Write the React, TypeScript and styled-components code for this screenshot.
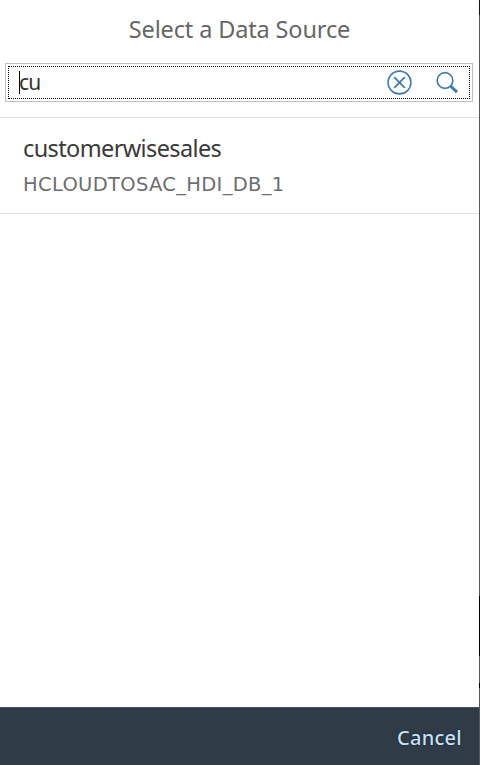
import React from "react";
import styled, { createGlobalStyle } from "styled-components";

const GlobalStyle = createGlobalStyle`
  * { box-sizing: border-box; }
  body { margin: 0; background: #fff; overflow: hidden; font-family: "Noto Sans", "Open Sans", sans-serif; }
`;

const Dialog = styled.main`
  width: 480px;
  height: 765px;
  display: flex;
  flex-direction: column;
  background: #fff;
  border-right: 1px solid;
  border-image: linear-gradient(#0a1420 0 16px, #54585a 16px 595px, #000 595px 655px, #54585a 655px 682px, #000 682px 687px, #54585a 687px) 1;
  border-width: 0 1px 0 0;
`;

const Title = styled.h1`
  margin: 0;
  height: 63px;
  padding-top: 13px;
  text-align: center;
  font-size: 23.5px;
  line-height: 32px;
  font-weight: 400;
  letter-spacing: -0.14px;
  color: #666;
`;

const SearchBox = styled.div`
  width: 468px;
  height: 39px;
  margin-left: 5px;
  padding: 2px;
  border: 1px solid #bfbfbf;
`;

const FocusFrame = styled.div`
  height: 33px;
  display: flex;
  align-items: center;
  border: 1px dotted #000;
  padding: 0 9px 0 10px;
`;

const Caret = styled.span`
  width: 1px;
  height: 23px;
  margin-right: -1px;
  background: #000;
`;

const Query = styled.span`
  flex: 1;
  padding-bottom: 2px;
  font-size: 21px;
  line-height: 28px;
  letter-spacing: -0.8px;
  color: #333;
`;

const IconButton = styled.button<{ $gap?: number }>`
  display: flex;
  padding: 0;
  margin: 0 ${(p) => p.$gap ?? 0}px 0 0;
  border: 0;
  background: none;
  color: #427cac;
`;

const List = styled.ul`
  flex: 1;
  margin: 15px 0 0;
  padding: 0;
  list-style: none;
  border-top: 1px solid #e5e5e5;
`;

const Item = styled.li`
  height: 96px;
  padding: 14px 23px 0;
  border-bottom: 1px solid #e5e5e5;
`;

const Name = styled.div`
  font-size: 23.5px;
  line-height: 32px;
  letter-spacing: -0.62px;
  color: #3a3a3a;
`;

const Source = styled.div`
  margin-top: 7px;
  font-family: "DejaVu Sans", sans-serif;
  font-size: 19.5px;
  line-height: 28px;
  letter-spacing: 0.32px;
  color: #6e6e6e;
`;

const Footer = styled.footer`
  height: 58px;
  display: flex;
  justify-content: flex-end;
  align-items: center;
  padding: 3px 17px 0 0;
  background: #2f3c48;
  border-top: 1px solid #465564;
`;

const CancelButton = styled.button`
  padding: 0;
  border: 0;
  background: none;
  font: 500 20px/28px "Noto Sans", sans-serif;
  letter-spacing: 0.25px;
  color: #c8e0f8;
  text-shadow: 0 0 2px #101820;
`;

export default function App() {
  return (
    <>
      <GlobalStyle />
      <Dialog>
        <Title>Select a Data Source</Title>
        <SearchBox>
          <FocusFrame>
            <Caret />
            <Query>cu</Query>
            <IconButton $gap={23} aria-label="Clear">
              <svg width="26" height="26" viewBox="0 0 26 26" fill="none" stroke="currentColor">
                <circle cx="12.5" cy="12.5" r="11.4" strokeWidth="1.6" />
                <path d="M7.2 7.2 17.8 17.8M17.8 7.2 7.2 17.8" strokeWidth="1.9" />
              </svg>
            </IconButton>
            <IconButton aria-label="Search">
              <svg width="24" height="24" viewBox="0 0 24 24" fill="none" stroke="currentColor">
                <circle cx="9" cy="9.5" r="7.8" strokeWidth="1.7" />
                <path d="M14.5 15 21 21.2" strokeWidth="3.1" />
              </svg>
            </IconButton>
          </FocusFrame>
        </SearchBox>
        <List>
          <Item>
            <Name>customerwisesales</Name>
            <Source>HCLOUDTOSAC_HDI_DB_1</Source>
          </Item>
        </List>
        <Footer>
          <CancelButton>Cancel</CancelButton>
        </Footer>
      </Dialog>
    </>
  );
}
